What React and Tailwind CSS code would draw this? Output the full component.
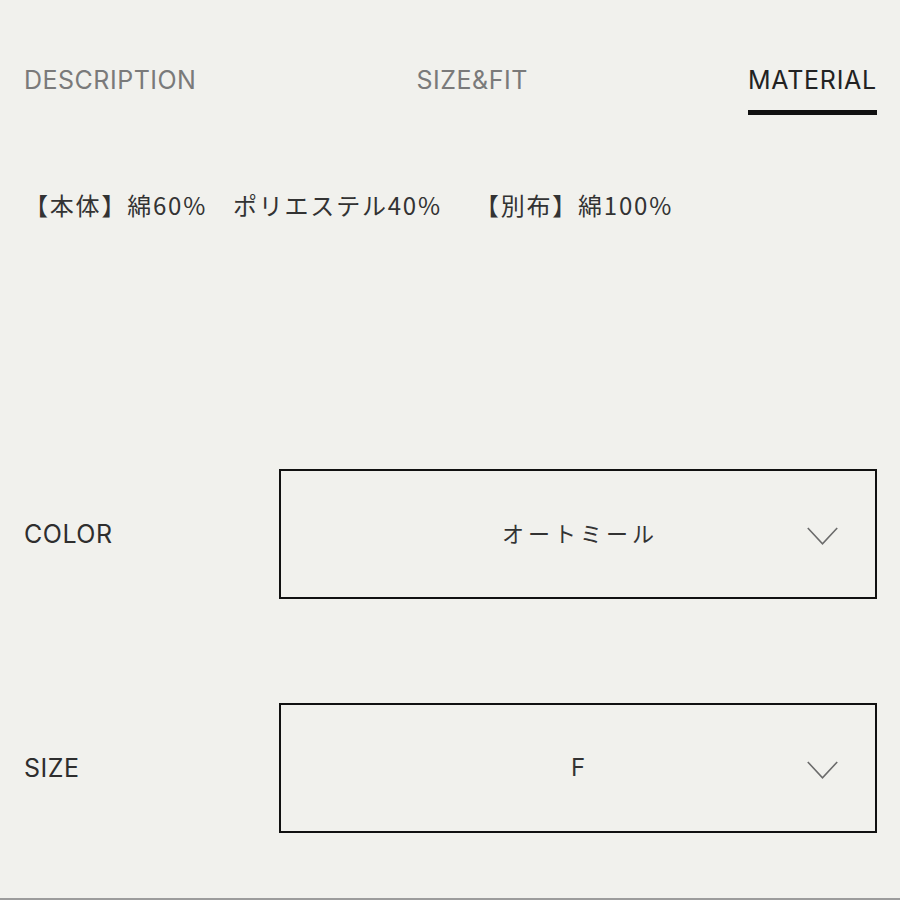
import React from "react";

function Chevron() {
  return (
    <svg width="31" height="18" viewBox="0 0 31 18" className="absolute right-[37px] top-[calc(50%+2px)] -translate-y-1/2" fill="none">
      <path d="M0.8 1 L15.5 16.8 L30.2 1" stroke="#6b6b6b" strokeWidth="1.6" strokeLinejoin="miter" />
    </svg>
  );
}

function SelectRow({ label, value, jp }) {
  return (
    <div className="flex items-center pl-6 pr-[23px]">
      <div className="w-[255px] text-[25px] tracking-[0.02em] text-[#2e2e2e] leading-8" style={{ fontFamily: "Inter, 'Noto Sans', sans-serif" }}>{label}</div>
      <div className="relative flex-1 h-[130px] border-2 border-[#111] flex items-center justify-center">
        <span
          className={jp ? "text-[22px] tracking-[0.18em] pl-[0.18em] text-[#333]" : "text-[24px] text-[#333]"}
          style={{ fontFamily: "Inter, 'Noto Sans CJK JP', sans-serif" }}
        >
          {value}
        </span>
        <Chevron />
      </div>
    </div>
  );
}

export default function App() {
  return (
    <div className="w-[900px] h-[900px] bg-[#f1f1ed] border-b-2 border-[#9c9c9c] overflow-hidden" style={{ fontFamily: "Inter, 'Noto Sans CJK JP', sans-serif" }}>
      <div className="flex justify-between pl-6 pr-[23px] pt-16">
        <div className="flex flex-col">
          <span className="text-[25px] leading-8 tracking-[0.02em] text-[#7a7a7a]">DESCRIPTION</span>
        </div>
        <div className="flex flex-col">
          <span className="text-[25px] leading-8 tracking-[0.02em] text-[#7a7a7a]">SIZE&amp;FIT</span>
        </div>
        <div className="flex flex-col">
          <span className="text-[25px] leading-8 tracking-[0.03em] text-[#222]">MATERIAL</span>
          <div className="mt-[14px] h-[5px] bg-[#111]" />
        </div>
      </div>
      <div className="pl-6 pt-[74px] text-[24px] leading-8 tracking-[0.075em] text-[#333] whitespace-nowrap" style={{ fontFamily: "'Noto Sans CJK JP', sans-serif" }}>
        【本体】綿60%　ポリエステル40%　 【別布】綿100%
      </div>
      <div className="pt-[248px] flex flex-col gap-[104px]">
        <SelectRow label="COLOR" value="オートミール" jp />
        <SelectRow label="SIZE" value="F" />
      </div>
    </div>
  );
}
